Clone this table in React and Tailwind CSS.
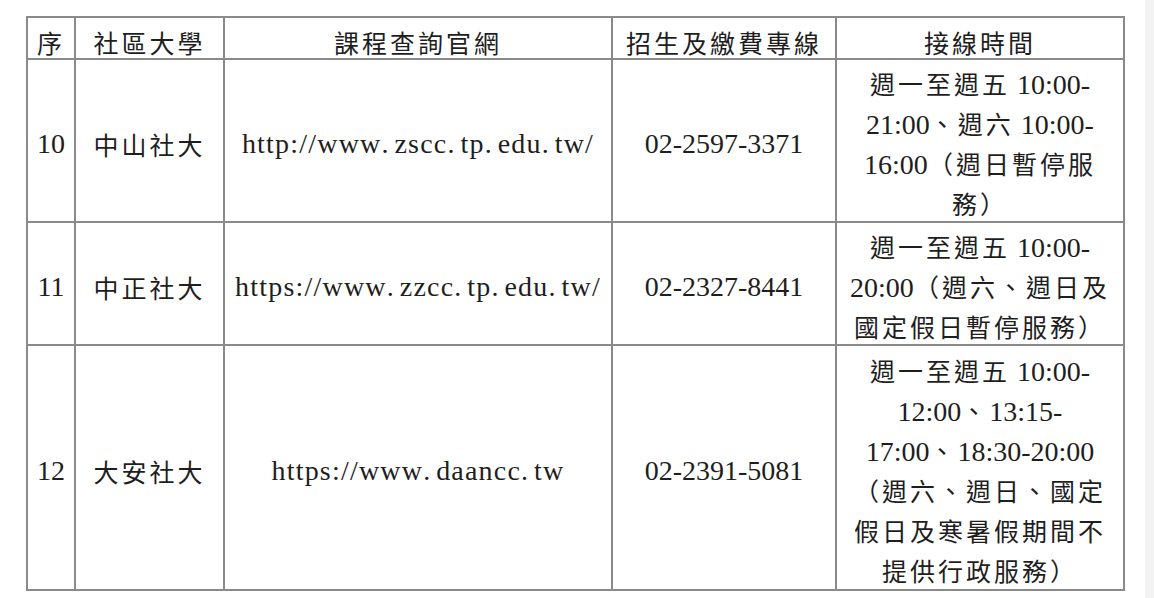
import React from "react";

const CJK = /([\u3000-\u303f\u4e00-\u9fff\uff00-\uffef]+)/;

function Mixed({ text }) {
  const parts = text.split(CJK).filter((p) => p !== "");
  return (
    <>
      {parts.map((p, i) =>
        CJK.test(p) ? (
          <span
            key={i}
            className="text-[25px] tracking-[3px] font-normal"
            style={{ fontFamily: '"Noto Sans CJK TC", "Noto Sans CJK SC", sans-serif' }}
          >
            {p}
          </span>
        ) : (
          <span key={i}>{p}</span>
        )
      )}
    </>
  );
}

function Url({ text }) {
  const parts = text.split(".");
  return (
    <span className="whitespace-nowrap tracking-[1.2px]">
      {parts.map((p, i) => (
        <React.Fragment key={i}>
          {p}
          {i < parts.length - 1 && <span className="inline-block w-[13px] text-left">.</span>}
        </React.Fragment>
      ))}
    </span>
  );
}

const rows = [
  {
    h: "h-[163px]",
    no: "10",
    name: "中山社大",
    url: "http://www.zscc.tp.edu.tw/",
    tel: "02-2597-3371",
    time: ["週一至週五 10:00-", "21:00、週六 10:00-", "16:00（週日暫停服", "務）"],
  },
  {
    h: "h-[123px]",
    no: "11",
    name: "中正社大",
    url: "https://www.zzcc.tp.edu.tw/",
    tel: "02-2327-8441",
    time: ["週一至週五 10:00-", "20:00（週六、週日及", "國定假日暫停服務）"],
  },
  {
    h: "h-[245px]",
    no: "12",
    name: "大安社大",
    url: "https://www.daancc.tw",
    tel: "02-2391-5081",
    time: [
      "週一至週五 10:00-",
      "12:00、13:15-",
      "17:00、18:30-20:00",
      "（週六、週日、國定",
      "假日及寒暑假期間不",
      "提供行政服務）",
    ],
  },
];

const cell =
  "border-r-2 border-b-2 border-[#8a8a8a] flex items-center justify-center text-center whitespace-nowrap";

export default function App() {
  return (
    <div
      className="w-[1154px] h-[598px] bg-white flex text-[#1e1e1e] text-[28px] leading-[40px]"
      style={{ fontFamily: '"Liberation Serif", "Noto Sans CJK TC", serif' }}
    >
      <div className="flex-1 pl-[26px] pt-[16px]">
        <div className="grid grid-cols-[48px_149px_388px_224px_288px] w-max border-l-2 border-t-2 border-[#8a8a8a]">
          {["序", "社區大學", "課程查詢官網", "招生及繳費專線", "接線時間"].map((t) => (
            <div key={t} className={`${cell} h-[42px] pt-[8px]`}>
              <Mixed text={t} />
            </div>
          ))}
          {rows.map((r) => (
            <React.Fragment key={r.no}>
              <div className={`${cell} ${r.h} pt-[6px]`}>{r.no}</div>
              <div className={`${cell} ${r.h} pt-[6px]`}>
                <Mixed text={r.name} />
              </div>
              <div className={`${cell} ${r.h} pt-[6px]`}>
                <Url text={r.url} />
              </div>
              <div className={`${cell} ${r.h} pt-[6px]`}>{r.tel}</div>
              <div className={`${cell} ${r.h} pt-[4px] flex-col`}>
                {r.time.map((l, i) => (
                  <div key={i} className="h-[40px] leading-[40px] whitespace-nowrap">
                    <Mixed text={l} />
                  </div>
                ))}
              </div>
            </React.Fragment>
          ))}
        </div>
      </div>
      <div className="w-[9px] h-full bg-[#f3f3f3]" />
    </div>
  );
}
